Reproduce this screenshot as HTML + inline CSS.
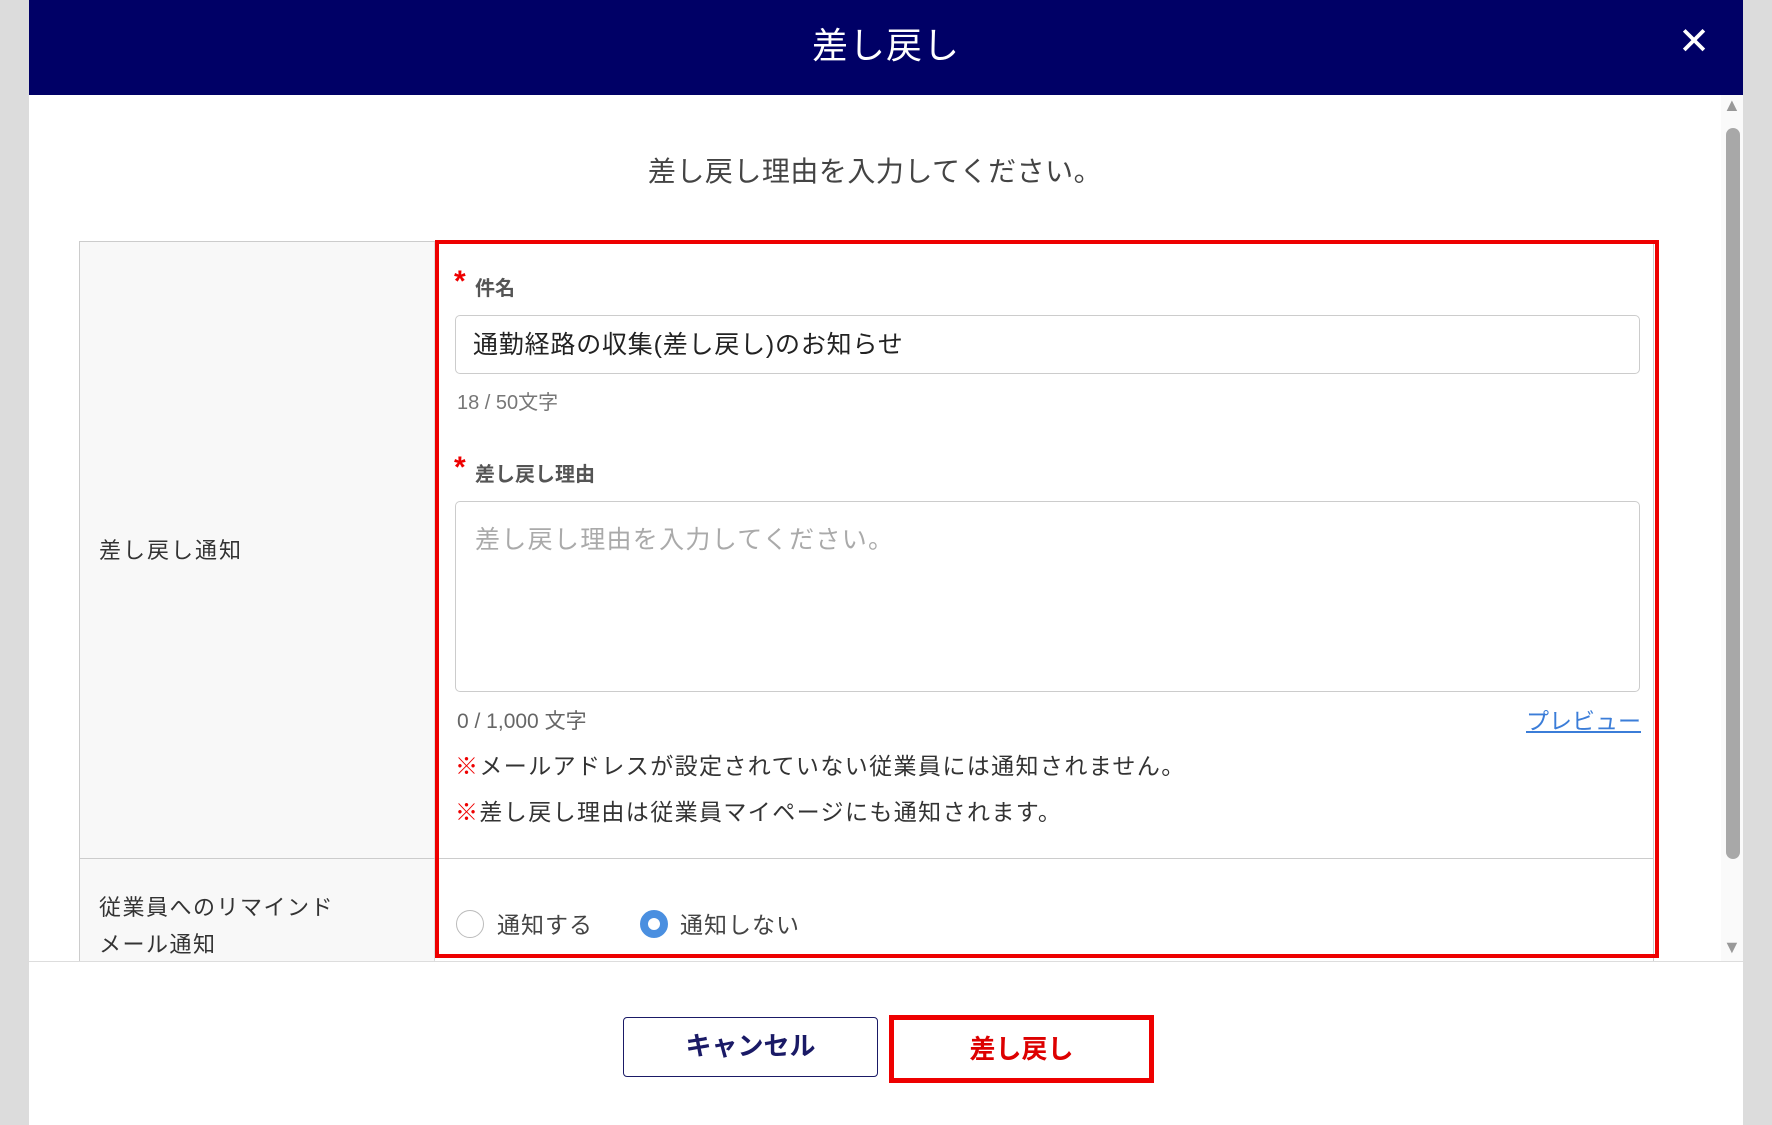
<!DOCTYPE html>
<html><head><meta charset="utf-8"><style>
*{margin:0;padding:0;box-sizing:border-box}
body{width:1772px;height:1125px;background:#dcdcdc;font-family:"Liberation Sans","Noto Sans CJK JP",sans-serif;position:relative;overflow:hidden;color:#333}
.modal{position:absolute;left:29px;top:0;width:1714px;height:1125px;background:#fff}
.hdr{position:absolute;left:0;top:0;width:1714px;height:95px;background:#000066;color:#fff;text-align:center;font-size:36px;line-height:92px;letter-spacing:1px}
.x{position:absolute;right:32px;top:22px;font-size:38px;line-height:40px;color:#fff}
.a{position:absolute;white-space:nowrap}
.body{position:absolute;left:0;top:95px;width:1714px;height:867px;overflow:hidden;border-bottom:1px solid #ddd}
.t{position:absolute}
</style></head><body>
<div class="modal">
<div class="hdr">差し戻し<span class="x">✕</span></div>
<div class="body">
 <div class="a" style="left:0;width:1692px;text-align:center;top:55px;font-size:28px;color:#444;letter-spacing:0.5px">差し戻し理由を入力してください。</div>
 <div class="t" style="left:50px;top:146px;width:1575px;height:760px;border:1px solid #ccc;border-bottom:none"></div>
 <div class="t" style="left:51px;top:147px;width:355px;height:760px;background:#f8f8f8;border-right:1px solid #ddd"></div>
 <div class="t" style="left:51px;top:763px;width:1573px;height:1px;background:#ccc"></div>
 <div class="a" style="left:70px;top:438px;font-size:22px;color:#333;letter-spacing:2px">差し戻し通知</div>
 <div class="a" style="left:70px;top:794px;font-size:22px;color:#333;line-height:37px;letter-spacing:1.5px">従業員へのリマインド<br>メール通知</div>
 <div class="t" style="left:406px;top:145px;width:1224px;height:718px;border:4px solid #ee0000"></div>
 <div class="a" style="left:425px;top:170px;font-size:30px;color:#e00;font-weight:bold">*</div>
 <div class="a" style="left:446px;top:177px;font-size:20px;color:#555;font-weight:bold">件名</div>
 <div class="t" style="left:426px;top:220px;width:1185px;height:59px;border:1px solid #ccc;border-radius:5px"></div>
 <div class="a" style="left:444px;top:230px;font-size:25px;color:#222;letter-spacing:0.8px">通勤経路の収集(差し戻し)のお知らせ</div>
 <div class="a" style="left:428px;top:291px;font-size:20px;color:#777">18 / 50文字</div>
 <div class="a" style="left:425px;top:356px;font-size:30px;color:#e00;font-weight:bold">*</div>
 <div class="a" style="left:446px;top:363px;font-size:20px;color:#555;font-weight:bold">差し戻し理由</div>
 <div class="t" style="left:426px;top:406px;width:1185px;height:191px;border:1px solid #ccc;border-radius:5px"></div>
 <div class="a" style="left:446px;top:425px;font-size:25px;color:#aaa;letter-spacing:1.3px">差し戻し理由を入力してください。</div>
 <div class="a" style="left:428px;top:610px;font-size:21px;color:#666">0 / 1,000 文字</div>
 <div class="a" style="left:1497px;top:607px;font-size:23px;color:#3b7dd8;text-decoration:underline">プレビュー</div>
 <div class="a" style="left:426px;top:652px;font-size:23px;color:#333;letter-spacing:1.4px"><span style="color:#e00;font-weight:bold">※</span>メールアドレスが設定されていない従業員には通知されません。</div>
 <div class="a" style="left:426px;top:698px;font-size:23px;color:#333;letter-spacing:1.4px"><span style="color:#e00;font-weight:bold">※</span>差し戻し理由は従業員マイページにも通知されます。</div>
 <div class="t" style="left:427px;top:815px;width:28px;height:28px;border:1px solid #bbb;border-radius:50%"></div>
 <div class="a" style="left:468px;top:811px;font-size:23px;color:#444;letter-spacing:1px">通知する</div>
 <div class="t" style="left:611px;top:815px;width:28px;height:28px;border:8px solid #4a8fe0;border-radius:50%;background:#fff"></div>
 <div class="a" style="left:651px;top:811px;font-size:23px;color:#444;letter-spacing:1px">通知しない</div>
 <div class="t" style="left:1692px;top:0;width:22px;height:867px;background:#fafafa"></div>
 <div class="t" style="left:1697px;top:33px;width:14px;height:731px;background:#a8a8a8;border-radius:7px"></div>
 <div class="a" style="left:1694px;top:0px;font-size:18px;color:#999">▲</div>
 <div class="a" style="left:1694px;top:842px;font-size:18px;color:#999">▼</div>
</div>
<div class="t" style="left:594px;top:1017px;width:255px;height:60px;border:1.5px solid #1a1a66;border-radius:4px;text-align:center;line-height:56px;font-size:26px;font-weight:bold;color:#1a1a66">キャンセル</div>
<div class="t" style="left:860px;top:1015px;width:265px;height:68px;border:5px solid #ee0000;text-align:center;line-height:58px;font-size:26px;font-weight:bold;color:#dd0000">差し戻し</div>
</div>
</body></html>
